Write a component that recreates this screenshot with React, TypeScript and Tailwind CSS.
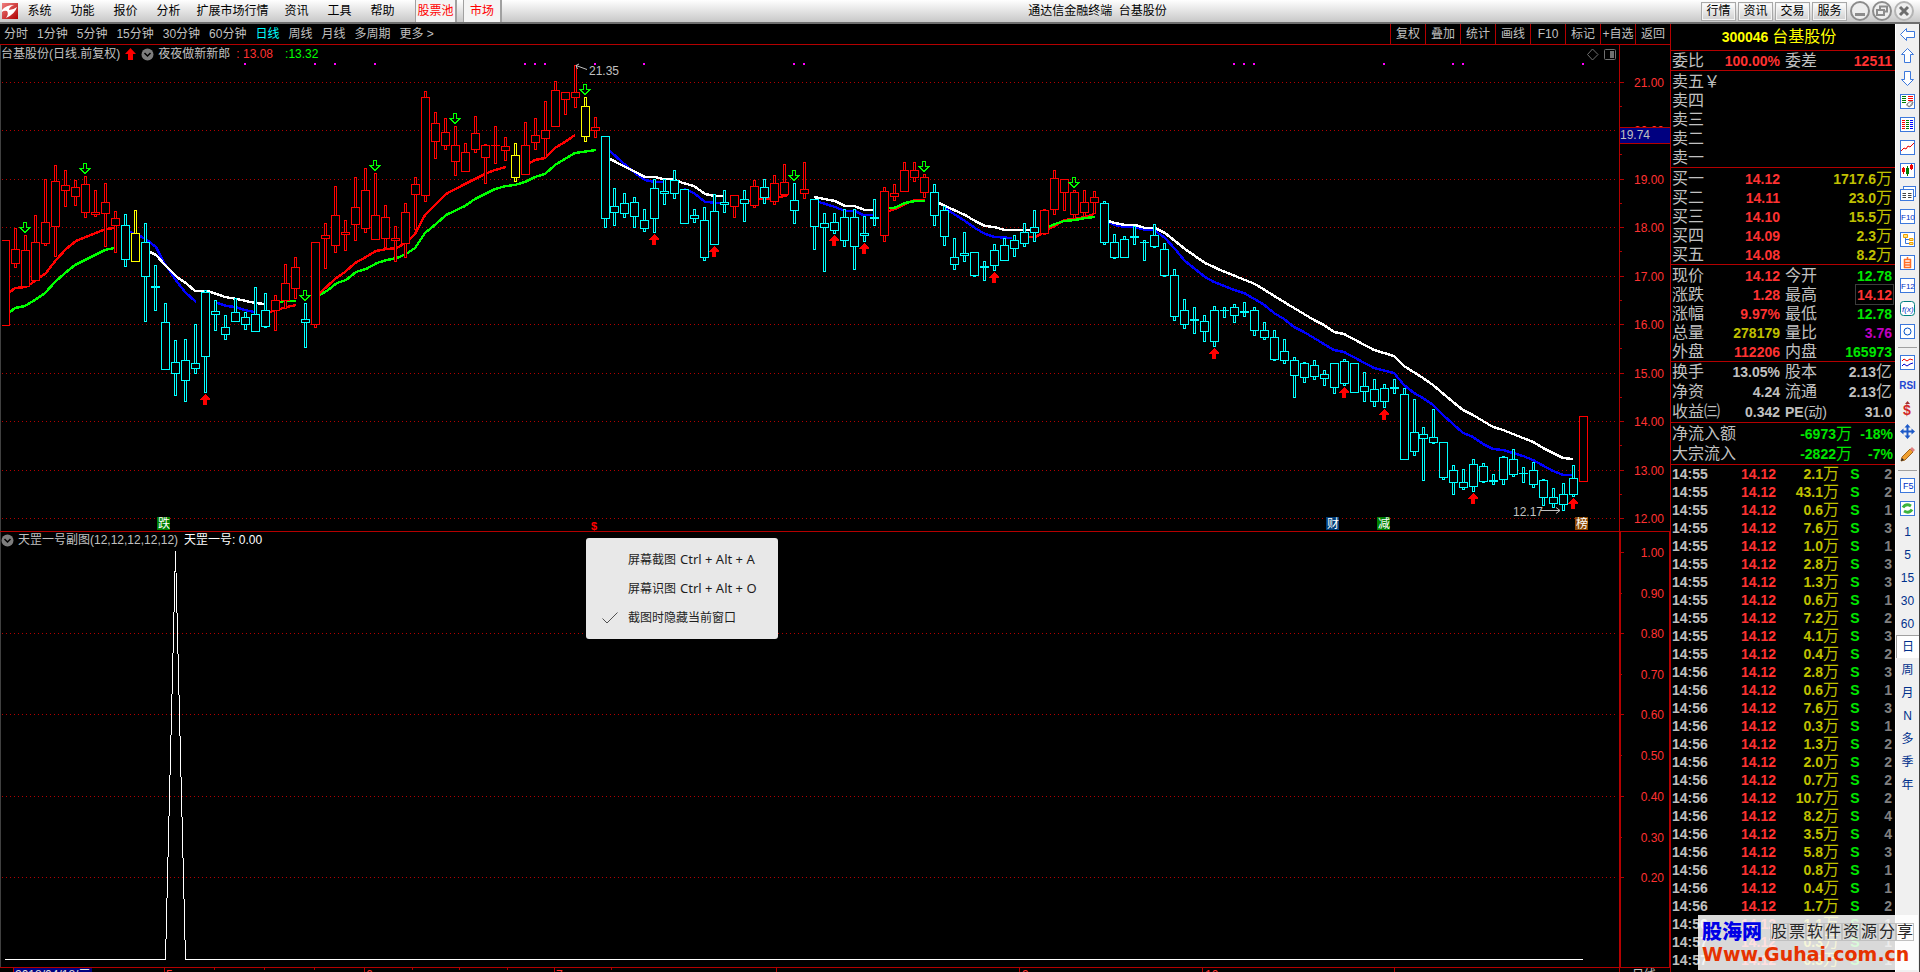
import React from "react";
import clsx from "clsx";

const MENUS = ["系统", "功能", "报价", "分析", "扩展市场行情", "资讯", "工具", "帮助"];
const SHORTCUTS = ["行情", "资讯", "交易", "服务"];
const PERIODS = [
  "分时",
  "1分钟",
  "5分钟",
  "15分钟",
  "30分钟",
  "60分钟",
  "日线",
  "周线",
  "月线",
  "多周期",
  "更多 >",
];
const TOOLS = ["复权", "叠加", "统计", "画线", "F10", "标记", "+自选", "返回"];

const COLORS: Record<string, string> = {
  r: "#ff0000",
  c: "#00ffff",
  y: "#ffff00",
};

type Candle = [string, number, number, number, number];

// color, high, body top, body bottom, low
const CANDLES: Candle[] = [
  ["r", 228, 249, 263, 267],
  ["r", 235, 250, 286, 286],
  ["r", 215, 242, 280, 280],
  ["r", 179, 222, 243, 245],
  ["r", 165, 181, 226, 256],
  ["r", 170, 185, 190, 206],
  ["r", 180, 187, 196, 205],
  ["r", 176, 184, 212, 217],
  ["r", 190, 212, 214, 216],
  ["r", 183, 202, 213, 246],
  ["r", 211, 218, 225, 252],
  ["c", 214, 225, 259, 266],
  ["y", 210, 233, 261, 261],
  ["c", 223, 242, 276, 321],
  ["c", 265, 286, 287, 310],
  ["c", 303, 322, 369, 369],
  ["c", 340, 362, 373, 395],
  ["c", 339, 360, 380, 401],
  ["c", 324, 363, 368, 373],
  ["c", 290, 292, 356, 392],
  ["c", 300, 311, 314, 330],
  ["c", 315, 327, 334, 339],
  ["c", 298, 312, 321, 321],
  ["c", 312, 317, 324, 329],
  ["c", 287, 314, 331, 331],
  ["c", 293, 310, 326, 327],
  ["r", 295, 300, 310, 330],
  ["r", 264, 283, 300, 308],
  ["r", 257, 267, 288, 298],
  ["c", 303, 319, 322, 347],
  ["r", 242, 242, 324, 327],
  ["r", 223, 235, 238, 268],
  ["r", 186, 215, 245, 252],
  ["r", 220, 232, 234, 250],
  ["r", 177, 207, 224, 240],
  ["r", 168, 190, 228, 232],
  ["r", 173, 215, 239, 239],
  ["r", 205, 217, 238, 247],
  ["r", 226, 238, 240, 261],
  ["r", 203, 212, 243, 257],
  ["r", 177, 184, 194, 229],
  ["r", 91, 97, 195, 201],
  ["r", 112, 123, 141, 158],
  ["r", 118, 132, 145, 149],
  ["r", 126, 145, 161, 175],
  ["r", 143, 152, 171, 171],
  ["r", 116, 133, 149, 152],
  ["r", 144, 145, 157, 183],
  ["r", 126, 145, 145, 163],
  ["r", 137, 146, 150, 160],
  ["y", 143, 155, 177, 181],
  ["r", 122, 145, 174, 174],
  ["r", 118, 135, 142, 149],
  ["r", 101, 130, 138, 157],
  ["r", 81, 90, 126, 126],
  ["r", 92, 92, 99, 114],
  ["r", 65, 92, 97, 107],
  ["y", 97, 106, 136, 141],
  ["r", 117, 127, 130, 137],
  ["c", 136, 136, 218, 227],
  ["c", 188, 206, 212, 225],
  ["c", 193, 203, 213, 217],
  ["c", 197, 202, 216, 227],
  ["c", 209, 220, 228, 231],
  ["c", 179, 188, 218, 232],
  ["c", 179, 191, 193, 204],
  ["c", 170, 180, 193, 198],
  ["c", 189, 189, 223, 223],
  ["c", 209, 215, 218, 222],
  ["c", 207, 220, 257, 260],
  ["c", 194, 211, 244, 244],
  ["c", 190, 202, 204, 212],
  ["r", 195, 195, 206, 217],
  ["c", 190, 199, 203, 221],
  ["r", 180, 186, 205, 207],
  ["c", 179, 187, 197, 203],
  ["r", 175, 183, 201, 204],
  ["r", 164, 182, 194, 194],
  ["c", 183, 200, 210, 223],
  ["r", 162, 189, 193, 198],
  ["c", 199, 199, 226, 249],
  ["c", 213, 223, 227, 271],
  ["c", 213, 222, 230, 233],
  ["c", 209, 217, 240, 246],
  ["c", 209, 217, 246, 269],
  ["c", 216, 233, 235, 241],
  ["c", 199, 217, 218, 225],
  ["r", 187, 191, 235, 241],
  ["r", 184, 193, 196, 200],
  ["r", 162, 170, 191, 191],
  ["r", 162, 170, 177, 181],
  ["r", 174, 177, 192, 197],
  ["c", 184, 192, 215, 225],
  ["c", 206, 210, 236, 245],
  ["c", 238, 257, 264, 269],
  ["c", 232, 253, 255, 261],
  ["c", 252, 252, 275, 276],
  ["c", 261, 266, 267, 280],
  ["c", 244, 250, 265, 270],
  ["c", 238, 245, 260, 260],
  ["c", 235, 240, 248, 256],
  ["c", 223, 232, 243, 246],
  ["c", 210, 227, 232, 241],
  ["r", 209, 210, 233, 234],
  ["r", 170, 178, 209, 214],
  ["r", 179, 179, 192, 210],
  ["r", 190, 192, 214, 218],
  ["r", 190, 202, 212, 216],
  ["r", 191, 197, 202, 213],
  ["c", 201, 203, 242, 244],
  ["c", 234, 242, 257, 258],
  ["c", 236, 239, 257, 257],
  ["c", 226, 236, 237, 244],
  ["c", 240, 242, 242, 260],
  ["c", 224, 235, 246, 247],
  ["c", 243, 249, 275, 276],
  ["c", 269, 275, 316, 320],
  ["c", 299, 310, 324, 328],
  ["c", 307, 319, 320, 333],
  ["c", 315, 321, 331, 341],
  ["c", 306, 310, 341, 346],
  ["c", 307, 310, 310, 317],
  ["c", 304, 307, 315, 322],
  ["c", 302, 311, 312, 316],
  ["c", 307, 310, 330, 335],
  ["c", 322, 330, 337, 339],
  ["c", 330, 337, 359, 360],
  ["c", 339, 351, 360, 363],
  ["c", 357, 360, 375, 397],
  ["c", 362, 363, 377, 382],
  ["c", 360, 365, 376, 379],
  ["c", 370, 374, 378, 385],
  ["c", 363, 363, 387, 393],
  ["c", 359, 361, 383, 385],
  ["c", 363, 363, 392, 392],
  ["c", 372, 386, 391, 401],
  ["c", 379, 389, 401, 406],
  ["c", 384, 388, 401, 407],
  ["c", 379, 387, 388, 393],
  ["c", 388, 394, 459, 459],
  ["c", 399, 432, 451, 455],
  ["c", 427, 434, 438, 480],
  ["c", 409, 437, 442, 443],
  ["c", 442, 442, 477, 479],
  ["c", 465, 470, 482, 494],
  ["c", 469, 482, 487, 489],
  ["c", 459, 464, 486, 491],
  ["c", 463, 466, 481, 482],
  ["c", 474, 480, 481, 484],
  ["c", 456, 457, 479, 484],
  ["c", 449, 459, 474, 476],
  ["c", 467, 473, 473, 482],
  ["c", 462, 470, 484, 487],
  ["c", 479, 480, 497, 505],
  ["c", 488, 497, 503, 507],
  ["c", 483, 494, 504, 510],
  ["c", 465, 478, 494, 496],
  ["r", 416, 416, 481, 481],
];

const LINES: { color: string; points: string }[] = [
  { color: "#ff0000", points: "10,292 15,288 26,287 35,281 46,273 56,260 66,249 76,241 86,237 96,233 106,229 114,228" },
  { color: "#00ff00", points: "10,312 15,308 25,306 35,300 45,293 55,282 65,273 75,265 85,260 95,255 105,250 114,248" },
  { color: "#0000ff", points: "130,232 140,236 147,240 156,247 163,261 175,279 185,292 196,302" },
  { color: "#ffffff", points: "150,252 156,255 165,265 177,277 187,284 195,291 208,291 225,297 237,299 255,303 265,304" },
  { color: "#0000ff", points: "217,303 227,306 235,307 245,310 254,312" },
  { color: "#ff0000", points: "270,312 283,308 296,305" },
  { color: "#00ff00", points: "279,302 285,301 296,301" },
  { color: "#00ff00", points: "320,295 328,290 337,283 346,280 356,272 366,269 377,263 387,260 397,258 406,254 415,248 425,233 436,224 446,215 465,206 475,199 485,194 495,189 506,186 515,185 525,182 535,177 545,174 555,165 575,153 596,150" },
  { color: "#ff0000", points: "320,293 335,279 345,272 355,263 366,257 376,251 387,249 397,248 405,243 410,239 415,234 425,215 435,205 446,194 465,184 485,174 495,170 506,167" },
  { color: "#ff0000", points: "530,163 535,160 545,158 555,148 565,142 575,135" },
  { color: "#0000ff", points: "610,151 622,162 635,173 645,180 655,182 663,182" },
  { color: "#0000ff", points: "684,189 694,193 705,202 720,203" },
  { color: "#ffffff", points: "610,159 645,177 655,177 663,179 673,179 683,183 694,186 705,194 715,196 723,196" },
  { color: "#ff0000", points: "748,201 760,199 775,198 784,196 788,195" },
  { color: "#0000ff", points: "819,202 835,207 845,211 855,211 863,215 873,215" },
  { color: "#ffffff", points: "814,197 835,201 845,206 854,206 865,210 873,210" },
  { color: "#ff0000", points: "889,211 895,209 907,203 915,200 925,200" },
  { color: "#00ff00", points: "889,208 894,208 905,203 915,201 925,201" },
  { color: "#0000ff", points: "943,207 954,214 965,221 975,228 985,234 995,237 1012,238" },
  { color: "#ffffff", points: "939,203 945,206 954,210 965,215 975,221 985,226 994,227 1005,230 1030,230" },
  { color: "#ff0000", points: "1029,237 1035,237 1041,234 1048,229 1055,226 1064,220 1075,219 1085,217 1094,214" },
  { color: "#00ff00", points: "1048,227 1055,224 1064,221 1075,220 1085,218 1095,217" },
  { color: "#0000ff", points: "1108,222 1115,225 1125,227 1135,227 1145,230 1154,230 1165,238 1175,249 1185,261 1195,269 1205,277 1214,282 1234,290 1244,293 1263,304 1274,313 1284,319 1294,327 1304,332 1334,350 1344,352 1374,368 1394,373 1404,385 1414,393 1423,398 1433,405 1443,415 1463,433 1473,437 1483,444 1493,449 1503,450 1523,456 1533,460 1553,471 1563,475 1572,475" },
  { color: "#ffffff", points: "1108,221 1115,223 1125,225 1135,225 1145,228 1155,228 1165,233 1175,241 1185,249 1195,256 1205,263 1214,267 1220,270 1235,276 1255,284 1284,302 1294,308 1314,320 1324,325 1334,332 1344,334 1374,350 1384,353 1394,356 1404,366 1423,378 1433,385 1453,402 1463,410 1473,415 1493,427 1503,430 1533,442 1543,448 1553,453 1563,458 1573,459" },
];

const SELL_MARKS = [
  [25, 222], [85, 163], [305, 290], [375, 160], [455, 113],
  [585, 84], [794, 170], [924, 161], [1074, 177],
];
const BUY_MARKS = [
  [205, 394], [654, 234], [714, 246], [834, 235], [864, 243], [994, 272],
  [1214, 348], [1344, 387], [1384, 409], [1473, 493], [1573, 498],
];
const DOTS = [245, 315, 335, 375, 525, 535, 545, 595, 644, 794, 804, 1234, 1244, 1254, 1384, 1453, 1463, 1583];

const GRID = [82, 130, 179, 227, 276, 324, 373, 421, 470, 518];
const SUB_AXIS: [string, number][] = [
  ["1.00", 552],
  ["0.90", 593],
  ["0.80", 633],
  ["0.70", 674],
  ["0.60", 714],
  ["0.50", 755],
  ["0.40", 796],
  ["0.30", 837],
  ["0.20", 877],
];

const BADGES = [
  { x: 157, text: "跌", fill: "#008000" },
  { x: 1326, text: "财", fill: "#003c78" },
  { x: 1377, text: "减", fill: "#008000" },
  { x: 1575, text: "榜", fill: "#8c4600" },
];

const RED = "text-[#ff3232]";
const GREEN = "text-[#00e600]";
const YELLOW = "text-[#c0c000]";
const GRAY = "text-[#c0c0c0]";

const BIDS = [
  ["买一", "14.12", "1717.6"],
  ["买二", "14.11", "23.0"],
  ["买三", "14.10", "15.5"],
  ["买四", "14.09", "2.3"],
  ["买五", "14.08", "8.2"],
];

type Stat = [string, string, string, string, string, string];

const STATS: Stat[] = [
  ["现价", "14.12", RED, "今开", "12.78", GREEN],
  ["涨跌", "1.28", RED, "最高", "14.12", RED],
  ["涨幅", "9.97%", RED, "最低", "12.78", GREEN],
  ["总量", "278179", YELLOW, "量比", "3.76", "text-[#c000c0]"],
  ["外盘", "112206", RED, "内盘", "165973", GREEN],
];
const CAPITAL: Stat[] = [
  ["换手", "13.05%", GRAY, "股本", "2.13亿", GRAY],
  ["净资", "4.24", GRAY, "流通", "2.13亿", GRAY],
  ["收益㈢", "0.342", GRAY, "PE(动)", "31.0", GRAY],
];

const TICKS = [
  ["14:55", "2.1", "2"],
  ["14:55", "43.1", "2"],
  ["14:55", "0.6", "1"],
  ["14:55", "7.6", "3"],
  ["14:55", "1.0", "1"],
  ["14:55", "2.8", "3"],
  ["14:55", "1.3", "3"],
  ["14:55", "0.6", "1"],
  ["14:55", "7.2", "2"],
  ["14:55", "4.1", "3"],
  ["14:55", "0.4", "2"],
  ["14:56", "2.8", "3"],
  ["14:56", "0.6", "1"],
  ["14:56", "7.6", "3"],
  ["14:56", "0.3", "1"],
  ["14:56", "1.3", "2"],
  ["14:56", "2.0", "2"],
  ["14:56", "0.7", "2"],
  ["14:56", "10.7", "2"],
  ["14:56", "8.2", "4"],
  ["14:56", "3.5", "4"],
  ["14:56", "5.8", "3"],
  ["14:56", "0.8", "1"],
  ["14:56", "0.4", "1"],
  ["14:56", "1.7", "2"],
  ["14:56", "1.1", "1"],
  ["14:57", "0.3", "1"],
  ["14:57", "0.3", "1"],
];

function candleX(i: number) {
  return 15.5 + i * 10 - (i >= 60 ? 1 : 0) - (i >= 141 ? 1 : 0);
}

function TitleBar() {
  return (
    <header className="flex h-6 shrink-0 items-center border-b-2 border-[#6e6e6e] bg-gradient-to-b from-white to-[#c8c8c8] text-black">
      <svg width="18" height="18" viewBox="0 0 18 18" className="shrink-0">
        <defs>
          <linearGradient id="logo" x1="0" y1="0" x2="1" y2="1">
            <stop offset="0" stopColor="#f08080" />
            <stop offset="1" stopColor="#b00000" />
          </linearGradient>
        </defs>
        <rect x="2" y="1" width="16" height="16" fill="url(#logo)" />
        <path d="M2 8Q6 3 14 3Q9 5 9 8Q13 8 17 5Q15 12 6 16Q9 12 7 9Q4 8 2 10Z" fill="#fff" />
      </svg>
      <nav className="flex">
        {MENUS.map((m) => (
          <button key={m} className={m.length > 2 ? "w-[85px]" : "w-[43px]"}>
            {m}
          </button>
        ))}
      </nav>
      <button className="ml-[11px] h-[22px] w-[42px] border-x border-r-2 border-[#a0a0a0] bg-[#f4f4f4] text-[#ff0000]">
        股票池
      </button>
      <button className="ml-[6px] h-[22px] w-[39px] border-x border-r-2 border-[#a0a0a0] bg-[#f4f4f4] text-[#ff0000]">
        市场
      </button>
      <h1 className="flex-1 pr-2 text-center">通达信金融终端&nbsp; 台基股份</h1>
      <div className="flex gap-[2px]">
        {SHORTCUTS.map((s) => (
          <button
            key={s}
            className="h-[19px] w-[35px] border border-[#a8a8a8] bg-gradient-to-b from-white to-[#d0d0d0] leading-4 shadow-[inset_0_0_0_1px_#f4f4f4]"
          >
            {s}
          </button>
        ))}
      </div>
      <div className="ml-[3px] mr-[6px] flex gap-[2px]">
        <button aria-label="最小化">
          <svg width="20" height="20" fill="none" stroke="#8c8c8c">
            <circle cx="10" cy="10" r="9" strokeWidth="2" fill="#eee" />
            <rect x="5" y="12" width="10" height="3" fill="#8c8c8c" stroke="none" />
          </svg>
        </button>
        <button aria-label="还原">
          <svg width="20" height="20" fill="none" stroke="#8c8c8c">
            <circle cx="10" cy="10" r="9" strokeWidth="2" fill="#eee" />
            <rect x="8" y="5.5" width="7" height="5" strokeWidth="2" />
            <rect x="5" y="9" width="7" height="5" strokeWidth="2" fill="#eee" />
          </svg>
        </button>
        <button aria-label="关闭">
          <svg width="20" height="20" fill="none" stroke="#8c8c8c">
            <circle cx="10" cy="10" r="9" stroke="#b4b4b4" strokeWidth="2" fill="#eee" />
            <path d="M6 6L14 14M14 6L6 14" stroke="#6e6e6e" strokeWidth="3" />
          </svg>
        </button>
      </div>
    </header>
  );
}

function Toolbar() {
  return (
    <div className="flex h-[21px] shrink-0 items-stretch justify-between border-b border-[#b40000] text-[#c0c0c0]">
      <div className="flex gap-[9px] pl-1">
        {PERIODS.map((p) => (
          <button key={p} className={p === "日线" ? "text-[#00ffff]" : ""}>
            {p}
          </button>
        ))}
      </div>
      <div className="flex">
        {TOOLS.map((t) => (
          <button key={t} className="w-[35px] border-l border-[#b40000] whitespace-nowrap">
            {t}
          </button>
        ))}
      </div>
    </div>
  );
}

function Chevron() {
  return (
    <svg width="13" height="13" className="shrink-0">
      <circle cx="6.5" cy="6.5" r="6" fill="#7d7d7d" />
      <path d="M3.5 5L6.5 8L9.5 5" fill="none" stroke="#000" strokeWidth="1.5" />
    </svg>
  );
}

function PriceChart() {
  return (
    <svg className="block w-full flex-1">
      <g transform="translate(-1 -63)">
        <g shapeRendering="crispEdges">
          {GRID.map((y) => (
            <line key={y} x1="2" x2="1615" y1={y + 0.5} y2={y + 0.5} stroke="#b40000" strokeDasharray="1 3" />
          ))}
          {DOTS.map((x) => (
            <rect key={x} x={x - 1} y="63" width="2" height="2" fill="#ff00ff" />
          ))}
          {LINES.map((l, i) => (
            <polyline key={i} points={l.points} fill="none" stroke={l.color} strokeWidth="2.4" />
          ))}
          <path d="M2 240.5H9.5V325.5H2" fill="#000" stroke="#ff0000" />
          {CANDLES.map(([c, high, top, bottom, low], i) => {
            const x = candleX(i);
            return (
              <g key={i} fill="#000" stroke={COLORS[c]}>
                {high < top && <rect x={x - 1} y={high + 0.5} width="2" height={top - high} />}
                {low > bottom && <rect x={x - 1} y={bottom + 0.5} width="2" height={low - bottom} />}
                {top === bottom ? (
                  <line x1={x - 4.5} x2={x + 4.5} y1={top + 0.5} y2={top + 0.5} />
                ) : (
                  <rect x={x - 4} y={top + 0.5} width="8" height={bottom - top} />
                )}
              </g>
            );
          })}
          {SELL_MARKS.map(([x, y]) => (
            <path
              key={x}
              d={`M${x - 1.5} ${y + 0.5}h3v5h3.5L${x} ${y + 10.5}L${x - 5} ${y + 5.5}h3.5z`}
              fill="none"
              stroke="#00ff00"
            />
          ))}
          {BUY_MARKS.map(([x, y]) => (
            <path key={x} d={`M${x} ${y}l5 5v1h-3v5h-4v-5h-3v-1z`} fill="#ff0000" />
          ))}
          {BADGES.map((b) => (
            <rect key={b.x} x={b.x} y="517" width="13" height="13" fill={b.fill} />
          ))}
        </g>
        {BADGES.map((b) => (
          <text key={b.x} x={b.x + 1} y="528" fill="#fff" fontSize="12">
            {b.text}
          </text>
        ))}
        <text x="591" y="530" fill="#ff0000" fontSize="11" fontWeight="bold">
          $
        </text>
        <g fill="none" stroke="#c0c0c0">
          <path d="M587 69.5L576 65.5M579 64L576 65.5L577.5 69" />
          <path d="M1541 510.5H1560M1556 507.5L1560 510.5L1556 513.5" />
        </g>
        <g fill="#c0c0c0" fontSize="12">
          <text x="589" y="75">21.35</text>
          <text x="1513" y="516">12.17</text>
        </g>
      </g>
    </svg>
  );
}

function PriceAxis() {
  return (
    <svg className="block h-full w-[51px] shrink-0">
      <g transform="translate(0 -45)">
        <g stroke="#b40000" shapeRendering="crispEdges">
          <line x1="0.5" x2="0.5" y1="45" y2="532" />
          {GRID.map((y) => (
            <path key={y} d={`M0 ${y + 0.5}h5M0 ${y + 24.5}h3`} />
          ))}
        </g>
        <g fill="#ff3232" fontSize="12" textAnchor="end">
          {GRID.map((y, i) => (
            <text key={y} x="45" y={y + 5}>
              {(21 - i).toFixed(2)}
            </text>
          ))}
        </g>
        <rect x="1" y="127" width="50" height="17" fill="#000080" />
        <path d="M1 127.5h50M1 143.5h50" stroke="#b40000" />
        <text x="1" y="139" fill="#c0c0c0" fontSize="12">
          19.74
        </text>
      </g>
    </svg>
  );
}

function IndicatorChart() {
  return (
    <svg className="block w-full flex-1">
      <g transform="translate(-1 -548)" fill="none" shapeRendering="crispEdges">
        {SUB_AXIS.filter((_, i) => i % 2 === 0 && i > 0).map(([t, y]) => (
          <line key={t} x1="2" x2="1615" y1={y + 0.5} y2={y + 0.5} stroke="#b40000" strokeDasharray="1 3" />
        ))}
        <polyline points="5,959.5 165.5,959.5 175.5,551 185.5,959.5 1583,959.5" stroke="#fff" />
      </g>
    </svg>
  );
}

function IndicatorAxis() {
  return (
    <svg className="block h-full w-[51px] shrink-0">
      <g transform="translate(0 -532)">
        <g stroke="#b40000" shapeRendering="crispEdges">
          <path d="M1 532V968M50.5 532V968" strokeWidth="2" />
          {SUB_AXIS.map(([t, y], i) => (
            <path key={t} d={`M0 ${y + 0.5}h${i % 2 === 0 ? 5 : 3}`} />
          ))}
        </g>
        <g fill="#ff3232" fontSize="12" textAnchor="end">
          {SUB_AXIS.map(([t, y]) => (
            <text key={t} x="45" y={y + 5}>
              {t}
            </text>
          ))}
        </g>
      </g>
    </svg>
  );
}

const CAPTURE_ITEMS = [
  { label: "屏幕截图", keys: "Ctrl + Alt + A" },
  { label: "屏幕识图", keys: "Ctrl + Alt + O" },
  { label: "截图时隐藏当前窗口", checked: true },
];

function CaptureMenu() {
  return (
    <ul
      role="menu"
      className="absolute top-[6px] left-[586px] w-48 rounded-[3px] bg-[#e8e8e8] py-[7px] font-['Noto_Sans','Noto_Sans_CJK_SC',sans-serif] text-xs text-[#1e1e1e]"
    >
      {CAPTURE_ITEMS.map((item) => (
        <li key={item.label} role="none">
          <button role="menuitem" className="flex h-[29px] w-full items-center pl-4 whitespace-nowrap">
            <span className="w-[26px]">
              {item.checked && (
                <svg width="16" height="12" fill="none" stroke="#505050">
                  <path d="M0.5 6.5L5 11L15.5 0.5" />
                </svg>
              )}
            </span>
            {item.label}
            {item.keys && <span className="ml-1 text-[13px]">{item.keys}</span>}
          </button>
        </li>
      ))}
    </ul>
  );
}

function TimeAxis() {
  return (
    <div className="flex h-[5px] shrink-0 overflow-hidden border-t border-[#b40000]">
      <svg className="block h-[4px] flex-1">
        <path
          d="M13.5 0v4M164.5 0v4M364.5 0v4M554.5 0v4M776.5 0v4M1019.5 0v4M1202.5 0v4M1394.5 0v4M214.5 0v2M264.5 0v2M314.5 0v2M412.5 0v2M459.5 0v2M507.5 0v2M611.5 0v2"
          stroke="#b40000"
        />
        <rect x="14" width="78" height="4" fill="#000080" />
        <text x="15" y="11" fill="#e0e0e0" fontSize="12">
          2018/04/18/三
        </text>
        <g fill="#ff3232" fontSize="12">
          <text x="166" y="11">5</text>
          <text x="366" y="11">6</text>
          <text x="556" y="11">7</text>
          <text x="1022" y="11">9</text>
          <text x="1205" y="11">10</text>
        </g>
      </svg>
      <div className="w-[51px] shrink-0 border-l border-[#b40000] pl-3 leading-[14px] text-[#c0c0c0]">日线</div>
    </div>
  );
}

// numbers are bold, the Chinese unit that follows them is not
function Num({ value, unit }: { value: string; unit?: string }) {
  const tail = value.endsWith("亿") ? "亿" : unit;
  return (
    <>
      <span className="text-sm leading-none font-bold">{value.replace("亿", "")}</span>
      {tail}
    </>
  );
}

function StatTable({ rows, tall }: { rows: Stat[]; tall?: boolean }) {
  return (
    <table className="w-full table-fixed border-separate border-spacing-0 border-b border-[#b40000]">
      <colgroup>
        <col className="w-[50px]" />
        <col className="w-[59px]" />
        <col className="w-[55px]" />
        <col />
      </colgroup>
      <tbody>
        {rows.map(([a, av, ac, b, bv, bc]) => (
          <tr key={a} className={tall ? "h-5" : "h-[19px]"}>
            <th className="text-left font-normal whitespace-nowrap">{a}</th>
            <td className={clsx("text-right", ac)}>
              <Num value={av} />
            </td>
            <th className="pl-[5px] text-left font-normal whitespace-nowrap">
              {b === "PE(动)" ? (
                <span className="text-sm leading-none">
                  <b>PE</b>(动)
                </span>
              ) : (
                b
              )}
            </th>
            <td className={clsx("pr-[3px] text-right", bc)}>
              <span className={b === "最高" ? "outline outline-offset-1 outline-[#3c3c3c]" : ""}>
                <Num value={bv} />
              </span>
            </td>
          </tr>
        ))}
      </tbody>
    </table>
  );
}

function QuotePanel() {
  return (
    <aside className="flex w-[225px] shrink-0 flex-col overflow-hidden border-l border-[#b40000] text-base leading-4 text-[#c0c0c0] [&_th:first-child]:pl-[1px]">
      <h2 className="flex h-[27px] shrink-0 items-center justify-center gap-1 border-b border-[#b40000] pr-2 text-[#ffff00]">
        <span className="text-sm font-bold">300046</span> 台基股份
      </h2>
      <table className="h-5 w-full table-fixed border-separate border-spacing-0 border-b border-[#b40000]">
        <tbody>
          <tr>
            <th className="w-[50px] text-left font-normal">委比</th>
            <td className="w-[59px] text-right text-[#ff3232]">
              <Num value="100.00%" />
            </td>
            <th className="w-[55px] pl-[5px] text-left font-normal">委差</th>
            <td className="pr-[3px] text-right text-[#ff3232]">
              <Num value="12511" />
            </td>
          </tr>
        </tbody>
      </table>
      <ul className="border-b border-[#b40000] pt-px pl-[1px]">
        {["卖五￥", "卖四", "卖三", "卖二", "卖一"].map((s) => (
          <li key={s} className="h-[19px] leading-[19px]">
            {s}
          </li>
        ))}
      </ul>
      <div className="pt-px">
        <table className="w-full table-fixed border-separate border-spacing-0 border-b border-[#b40000]">
          <colgroup>
            <col className="w-[50px]" />
            <col className="w-[59px]" />
            <col />
          </colgroup>
          <tbody>
            {BIDS.map(([label, price, vol]) => (
              <tr key={label} className="h-[19px]">
                <th className="text-left font-normal">{label}</th>
                <td className="text-right text-[#ff3232]">
                  <Num value={price} />
                </td>
                <td className="pr-[3px] text-right text-[#c0c000]">
                  <Num value={vol} unit="万" />
                </td>
              </tr>
            ))}
          </tbody>
        </table>
      </div>
      <div className="pt-px">
        <StatTable rows={STATS} />
      </div>
      <StatTable rows={CAPITAL} tall />
      <div className="pt-px">
        <table className="w-full table-fixed border-separate border-spacing-0 border-b border-[#b40000]">
          <colgroup>
            <col className="w-[80px]" />
            <col className="w-[101px]" />
            <col />
          </colgroup>
          <tbody>
            {[
              ["净流入额", "-6973", "-18%"],
              ["大宗流入", "-2822", "-7%"],
            ].map(([label, sum, pct]) => (
              <tr key={label} className="h-5">
                <th className="text-left font-normal">{label}</th>
                <td className="text-right text-[#00e600]">
                  <Num value={sum} unit="万" />
                </td>
                <td className="pr-[2px] text-right text-[#00e600]">
                  <Num value={pct} />
                </td>
              </tr>
            ))}
          </tbody>
        </table>
      </div>
      <table className="w-full table-fixed">
        <colgroup>
          <col className="w-[45px]" />
          <col className="w-[60px]" />
          <col className="w-[63px]" />
          <col className="w-[32px]" />
          <col />
        </colgroup>
        <tbody>
          {TICKS.map(([time, vol, count], i) => (
            <tr key={i} className="h-[18px]">
              <th className="text-left">
                <Num value={time} />
              </th>
              <td className="text-right text-[#ff3232]">
                <Num value="14.12" />
              </td>
              <td className="text-right text-[#c0c000]">
                <Num value={vol} unit="万" />
              </td>
              <td className="text-center text-[#00e600]">
                <Num value="S" />
              </td>
              <td className="pr-[3px] text-right text-[#808080]">
                <Num value={count} />
              </td>
            </tr>
          ))}
        </tbody>
      </table>
    </aside>
  );
}

function Frame({ children }: { children?: React.ReactNode }) {
  return (
    <>
      <rect x="1.5" y="1.5" width="14" height="14" fill="#fff" stroke="#3c78dc" />
      {children}
    </>
  );
}

const ICONS: Record<string, React.ReactNode> = {
  后退: <path d="M1.5 8.5L7.5 2.5V5.5H15.5V11.5H7.5V14.5Z" fill="#fff" stroke="#3c78dc" />,
  向上: <path d="M8.5 1.5L14.5 7.5H11.5V15.5H5.5V7.5H2.5Z" fill="#fff" stroke="#3c78dc" />,
  向下: <path d="M8.5 15.5L14.5 9.5H11.5V1.5H5.5V9.5H2.5Z" fill="#fff" stroke="#3c78dc" />,
  自选: (
    <Frame>
      <path d="M3 3.5H7M3 5.5H7M3 7.5H7M3 9.5H7" stroke="#008000" />
      <path d="M9 3.5H14M9 5.5H14M9 7.5H14" stroke="#f00" />
      <path d="M7 11.5L10 14L14 9M8 11Q11 7 14 9Q14 13 10 14Z" stroke="#888" fill="#ddd" />
    </Frame>
  ),
  报价表: (
    <Frame>
      <path d="M3 4.5H6M3 6.5H6M3 8.5H6M3 10.5H6M3 12.5H6" stroke="#f00" />
      <path d="M7 4.5H10M7 6.5H10M7 8.5H10M7 10.5H10M7 12.5H10" stroke="#008000" />
      <path d="M11 4.5H14M11 6.5H14M11 8.5H14M11 10.5H14M11 12.5H14" stroke="#00f" />
    </Frame>
  ),
  分时图: (
    <Frame>
      <path d="M2 12L5 9L7 10L9 7L11 8L15 4" fill="none" stroke="#e00" />
    </Frame>
  ),
  K线图: (
    <Frame>
      <path d="M4.5 5V12M12.5 2V8" stroke="#e00" />
      <path d="M3 6H6V10H3ZM11 3H14V7H11Z" fill="#e00" />
      <path d="M8.5 4V14" stroke="#008000" />
      <path d="M7 6H10V12H7Z" fill="#008000" />
    </Frame>
  ),
  公告: (
    <g fill="#fff" stroke="#3c78dc">
      <rect x="4.5" y="1.5" width="12" height="10" />
      <rect x="1.5" y="4.5" width="13" height="11" />
      <path d="M3.5 8.5H7M9 8.5H12.5M3.5 10.5H7M9 10.5H12.5M3.5 12.5H7M9 12.5H12.5" stroke="#444" />
    </g>
  ),
  F10: (
    <Frame>
      <text x="2" y="12" fontSize="8" fill="#0032c8">
        F10
      </text>
    </Frame>
  ),
  板块: (
    <Frame>
      <path d="M6.5 6V12.5H10M6.5 8.5H10" fill="none" stroke="#3c78dc" />
      <path d="M4.5 3.5H8.5V6.5H4.5ZM10.5 7.5H14V9.5H10.5ZM10.5 11.5H14V13.5H10.5Z" fill="#ffe680" stroke="#f0a000" />
    </Frame>
  ),
  自: (
    <Frame>
      <path d="M8.5 3V5M5 5.5H12M5.5 5V14M11.5 5V14M5 8.5H12M5 11H12M5 13.5H12" stroke="#ff6e28" strokeWidth="1.5" />
    </Frame>
  ),
  F12: (
    <Frame>
      <text x="2" y="12" fontSize="8" fill="#0032c8">
        F12
      </text>
    </Frame>
  ),
  公式: (
    <g>
      <rect x="1.5" y="1.5" width="14" height="14" rx="3" fill="#fff" stroke="#008080" />
      <text x="3" y="12" fontSize="8" fontStyle="italic" fill="#0032c8">
        f(x)
      </text>
    </g>
  ),
  画圈: (
    <Frame>
      <circle cx="8.5" cy="8.5" r="3.5" fill="none" stroke="#0050c8" />
    </Frame>
  ),
  指标: (
    <Frame>
      <path d="M3 7L5 5L8 7L11 5L14 6" fill="none" stroke="#e00" />
      <path d="M3 12L5 10L8 12L11 10L14 9" fill="none" stroke="#00c" />
    </Frame>
  ),
  资金: (
    <g>
      <path d="M8.5 1L11 4H6Z" fill="#a03030" />
      <text x="4" y="15" fontSize="14" fontWeight="bold" fill="#d22828">
        $
      </text>
    </g>
  ),
  移动: (
    <path
      d="M8.5 1L11.5 4.5H9.5V7.5H12.5V5.5L16 8.5L12.5 11.5V9.5H9.5V12.5H11.5L8.5 16L5.5 12.5H7.5V9.5H4.5V11.5L1 8.5L4.5 5.5V7.5H7.5V4.5H5.5Z"
      fill="#1e5ac8"
    />
  ),
  画笔: (
    <g>
      <path d="M2 15L3 11L11 3L14 6L6 14Z" fill="#f0a030" stroke="#a06420" />
      <path d="M11 3L13 1L16 4L14 6Z" fill="#e08080" />
      <path d="M2 15L3 12L5 14Z" fill="#222" />
    </g>
  ),
  F5: (
    <Frame>
      <text x="4" y="12" fontSize="9" fill="#0032c8">
        F5
      </text>
    </Frame>
  ),
  刷新: (
    <Frame>
      <path d="M4 7.5Q7 3 12 6M13 9.5Q10 14 5 11" fill="none" stroke="#3cb43c" strokeWidth="3" />
    </Frame>
  ),
};

const SIDE_TOP = ["向上", "向下", "自选", "报价表", "分时图", "K线图", "公告", "F10", "板块", "自", "F12", "公式", "画圈"];
const SIDE_MID = ["指标", "RSI", "资金", "移动", "画笔"];
const SIDE_LOW = ["F5", "刷新", "1", "5", "15", "30", "60", "日", "周", "月", "N", "多", "季", "年"];

function SideButton({ name }: { name: string }) {
  const icon = ICONS[name];
  return (
    <button
      aria-label={name}
      className={clsx(
        "flex h-[23px] shrink-0 items-center justify-center",
        name === "日" && "border-t border-l border-[#a0a0a0] bg-white",
        name === "RSI" && "text-[10px] font-bold text-[#1e46d2]"
      )}
    >
      {icon ? (
        <svg width="17" height="17">
          {icon}
        </svg>
      ) : (
        name
      )}
    </button>
  );
}

function SideBar() {
  return (
    <div className="flex w-[25px] shrink-0 flex-col border-r border-l border-r-[#404040] border-l-white bg-[#f0f0f0] text-[#00308c]">
      <button aria-label="后退" className="flex h-5 shrink-0 items-center justify-center">
        <svg width="17" height="17">
          {ICONS["后退"]}
        </svg>
      </button>
      {SIDE_TOP.map((n) => (
        <SideButton key={n} name={n} />
      ))}
      <hr className="mx-[2px] mt-1 mb-[3px] border-t border-[#a0a0a0]" />
      {SIDE_MID.map((n) => (
        <SideButton key={n} name={n} />
      ))}
      <hr className="mx-[2px] mt-1 mb-[3px] border-t border-[#a0a0a0]" />
      {SIDE_LOW.map((n) => (
        <SideButton key={n} name={n} />
      ))}
    </div>
  );
}

function Watermark() {
  return (
    <div className="absolute right-[2px] bottom-[2px] h-[55px] w-[220px] bg-white/85 pt-[5px] pl-1">
      <div className="flex h-6 items-center gap-2">
        <strong className="text-xl leading-6 font-black text-[#0000e6]">股海网</strong>
        <span className="flex text-[#282828]">
          {"股票软件资源分享".split("").map((ch) => (
            <span key={ch} className="h-[18px] w-[18px] border border-[#c0c0c0] text-center text-base leading-4">
              {ch}
            </span>
          ))}
        </span>
      </div>
      <a
        href="#guhai"
        className="block font-['DejaVu_Sans',sans-serif] text-[19px] leading-5 font-bold text-[#e63200]"
      >
        Www.Guhai.com.cn
      </a>
    </div>
  );
}

export default function App() {
  return (
    <div className="relative flex h-screen flex-col overflow-hidden bg-black font-['Liberation_Sans','Noto_Sans_CJK_SC',sans-serif] text-xs">
      <TitleBar />
      <div className="flex min-h-0 flex-1">
        <main className="flex min-w-0 flex-1 flex-col">
          <Toolbar />
          <section className="flex h-[487px] shrink-0 border-b border-[#b40000]">
            <div className="flex min-w-0 flex-1 flex-col border-l border-[#404040]">
              <div className="flex h-[18px] shrink-0 items-center text-[#c0c0c0]">
                <span>台基股份(日线.前复权)</span>
                <svg width="11" height="12" className="mx-[5px]">
                  <path d="M5.5 0L11 6H8V12H3V6H0Z" fill="#ff0000" />
                </svg>
                <Chevron />
                <span className="ml-1">夜夜做新新郎</span>
                <span className="ml-[6px] text-[#ff3232]">: 13.08</span>
                <span className="ml-3 text-[#00ff00]">:13.32</span>
                <svg width="29" height="13" className="mr-[3px] ml-auto" fill="none" stroke="#707070">
                  <path d="M5.5 1L11 6.5L5.5 12L0.5 6.5Z" />
                  <rect x="17.5" y="1.5" width="11" height="10" rx="1" />
                  <rect x="23" y="3" width="4" height="7" fill="#707070" stroke="none" />
                </svg>
              </div>
              <PriceChart />
            </div>
            <PriceAxis />
          </section>
          <section className="relative flex min-h-0 flex-1">
            <div className="flex min-w-0 flex-1 flex-col border-l border-[#404040]">
              <div className="flex h-4 shrink-0 items-center text-[#c0c0c0]">
                <Chevron />
                <span className="ml-1">天罡一号副图(12,12,12,12,12)</span>
                <span className="ml-[6px] text-white">天罡一号: 0.00</span>
              </div>
              <IndicatorChart />
            </div>
            <IndicatorAxis />
            <CaptureMenu />
          </section>
          <TimeAxis />
        </main>
        <QuotePanel />
        <SideBar />
      </div>
      <Watermark />
    </div>
  );
}
